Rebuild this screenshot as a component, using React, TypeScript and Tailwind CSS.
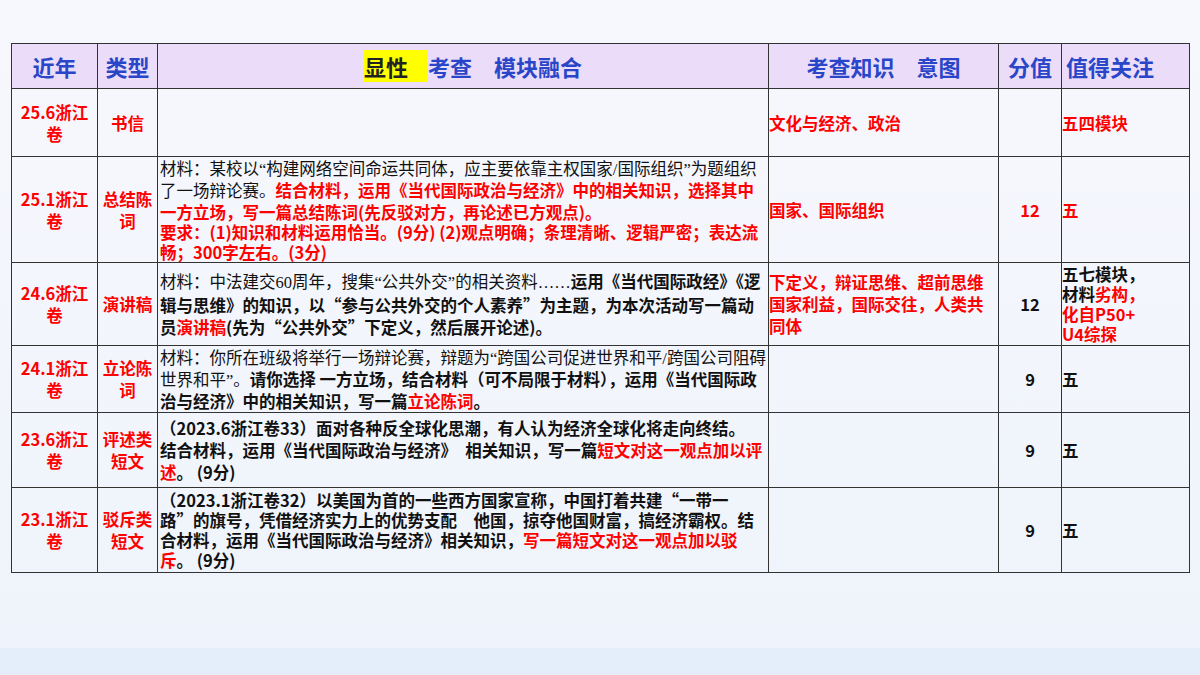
import React from 'react';

const R = ({ children }: { children: React.ReactNode }) => <span className="text-[#ff0000]">{children}</span>;
const Serif = ({ children }: { children: React.ReactNode }) => (
  <span className="font-normal" style={{ fontFamily: '"Liberation Serif", "Noto Sans CJK SC", serif' }}>{children}</span>
);

const td = 'border border-[#333] align-middle';

export default function App() {
  return (
    <div
      className="relative h-[675px] w-[1200px] overflow-hidden bg-gradient-to-b from-[#f7f8fd] to-[#eef3fb] font-bold"
      style={{ fontFamily: '"Noto Sans CJK SC", "Noto Sans", sans-serif' }}
    >
      <div className="absolute bottom-0 left-0 h-[27px] w-full bg-[#e3eefa]" />
      <div className="px-[11px] pt-[43px]">
        <table className="w-[1178px] table-fixed border-collapse leading-[22px] text-[#111]">
          <colgroup>
            <col className="w-[86px]" />
            <col className="w-[60px]" />
            <col className="w-[611px]" />
            <col className="w-[230px]" />
            <col className="w-[63px]" />
            <col className="w-[128px]" />
          </colgroup>
          <thead>
            <tr className="h-[45px] bg-[#ebdcfa] text-[22px] text-[#2946c8]">
              <td className={`${td} text-center`}>近年</td>
              <td className={`${td} text-center`}>类型</td>
              <td className={`${td} pl-[206px]`}>
                <span className="bg-[#ffff00] pr-[20px] text-[#222]">显性</span>考查　模块融合
              </td>
              <td className={`${td} text-center`}>考查知识　意图</td>
              <td className={`${td} text-center`}>分值</td>
              <td className={`${td} pl-1`}>值得关注</td>
            </tr>
          </thead>
          <tbody className="text-[16.5px]">
            <tr className="h-[68px]">
              <td className={`${td} text-center text-[#ff0000]`}>25.6浙江<br />卷</td>
              <td className={`${td} text-center text-[#ff0000]`}>书信</td>
              <td className={td}></td>
              <td className={`${td} text-[#ff0000]`}>文化与经济、政治</td>
              <td className={td}></td>
              <td className={`${td} text-[#ff0000]`}>五四模块</td>
            </tr>
            <tr className="h-[106px]">
              <td className={`${td} text-center text-[#ff0000]`}>25.1浙江<br />卷</td>
              <td className={`${td} text-center text-[#ff0000]`}>总结陈<br />词</td>
              <td className={`${td} px-[2px] leading-[20px]`}>
                <Serif>材料：某校以“构建网络空间命运共同体，应主要依靠主权国家/国际组织”为题组织了一场辩论赛。</Serif>
                <R>结合材料，运用《当代国际政治与经济》中的相关知识，选择其中一方立场，写一篇总结陈词(先反驳对方，再论述已方观点)。<br />要求：(1)知识和材料运用恰当。(9分) (2)观点明确；条理清晰、逻辑严密；表达流畅；300字左右。(3分)</R>
              </td>
              <td className={`${td} text-[#ff0000]`}>国家、国际组织</td>
              <td className={`${td} text-center text-[#ff0000]`}>12</td>
              <td className={`${td} text-[#ff0000]`}>五</td>
            </tr>
            <tr className="h-[83px]">
              <td className={`${td} text-center text-[#ff0000]`}>24.6浙江<br />卷</td>
              <td className={`${td} text-center text-[#ff0000]`}>演讲稿</td>
              <td className={`${td} px-[2px]`}>
                <Serif>材料：中法建交60周年，搜集“公共外交”的相关资料……</Serif>运用《当代国际政经》《逻辑与思维》的知识，以“参与公共外交的个人素养”为主题，为本次活动写一篇动员<R>演讲稿</R>(先为“公共外交”下定义，然后展开论述)。
              </td>
              <td className={`${td} text-[#ff0000]`}>下定义，辩证思维、超前思维国家利益，国际交往，人类共同体</td>
              <td className={`${td} text-center`}>12</td>
              <td className={`${td} leading-[20px]`}>五七模块，<br />材料<R>劣构，<br />化自P50+<br />U4综探</R></td>
            </tr>
            <tr className="h-[67px]">
              <td className={`${td} text-center text-[#ff0000]`}>24.1浙江<br />卷</td>
              <td className={`${td} text-center text-[#ff0000]`}>立论陈<br />词</td>
              <td className={`${td} px-[2px] leading-[21px]`}>
                <Serif>材料：你所在班级将举行一场辩论赛，辩题为“跨国公司促进世界和平/跨国公司阻碍世界和平”。</Serif>请你选择 一方立场，结合材料（可不局限于材料），运用《当代国际政治与经济》中的相关知识，写一篇<R>立论陈词</R>。
              </td>
              <td className={td}></td>
              <td className={`${td} text-center`}>9</td>
              <td className={td}>五</td>
            </tr>
            <tr className="h-[75px]">
              <td className={`${td} text-center text-[#ff0000]`}>23.6浙江<br />卷</td>
              <td className={`${td} text-center text-[#ff0000]`}>评述类<br />短文</td>
              <td className={`${td} px-[2px]`}>
                （2023.6浙江卷33）面对各种反全球化思潮，有人认为经济全球化将走向终结。<br />结合材料，运用《当代国际政治与经济》　相关知识，写一篇<R>短文对这一观点加以评述</R>。 (9分)
              </td>
              <td className={td}></td>
              <td className={`${td} text-center`}>9</td>
              <td className={td}>五</td>
            </tr>
            <tr className="h-[85px]">
              <td className={`${td} text-center text-[#ff0000]`}>23.1浙江<br />卷</td>
              <td className={`${td} text-center text-[#ff0000]`}>驳斥类<br />短文</td>
              <td className={`${td} px-[2px] leading-[20px]`}>
                （2023.1浙江卷32）以美国为首的一些西方国家宣称，中国打着共建“一带一路”的旗号，凭借经济实力上的优势支配　他国，掠夺他国财富，搞经济霸权。结合材料，运用《当代国际政治与经济》相关知识，<R>写一篇短文对这一观点加以驳斥</R>。 (9分)
              </td>
              <td className={td}></td>
              <td className={`${td} text-center`}>9</td>
              <td className={td}>五</td>
            </tr>
          </tbody>
        </table>
      </div>
    </div>
  );
}
